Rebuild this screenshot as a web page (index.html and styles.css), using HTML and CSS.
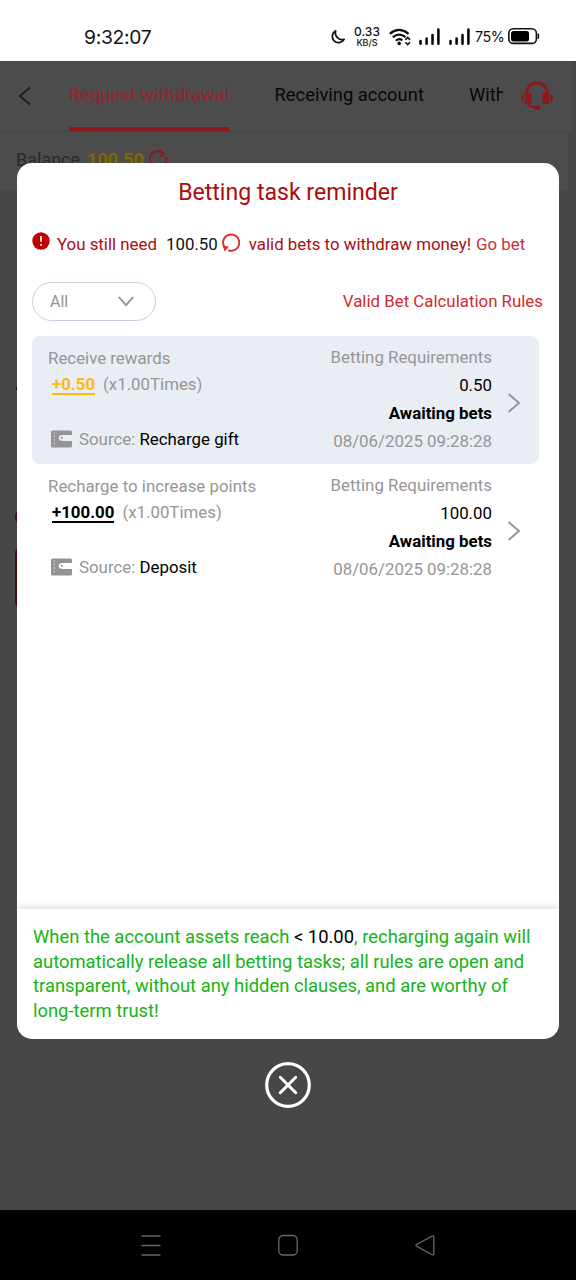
FILE: index.html
```html
<!DOCTYPE html>
<html lang="en">
<head>
<meta charset="utf-8">
<title>Betting task reminder</title>
<link rel="stylesheet" href="styles.css">
</head>
<body>
<div class="status">
  <span class="clock">9:32:07</span>
  <div class="indicators">
    <svg class="moon" width="16" height="16" viewBox="0 0 16 16"><path d="M5.6 1.8A6.3 6.3 0 1 0 14.1 10.4 7 7 0 0 1 5.6 1.8Z" fill="none" stroke="#111" stroke-width="1.8" stroke-linejoin="round"/></svg>
    <span class="speed"><b>0.33</b><i>KB/S</i></span>
    <svg class="wifi" width="22" height="18" viewBox="0 0 22 18"><g fill="none" stroke="#111" stroke-width="2.2"><path d="M.8 5.8Q10 -2 19.6 5.8"/><path d="M3.800 9.300Q10 3.900 16.600 9.200"/><path d="M6.800 12.700Q10 9.800 13.400 12.300"/></g><circle cx="10.200" cy="15.400" r="1.800" fill="#111"/><path d="M16.400 11.900L18.700 9.500L21 11.900M16.400 14.200L18.700 16.600L21 14.200" fill="none" stroke="#111" stroke-width="1.600"/></svg>
    <svg class="signal" width="21" height="17" viewBox="0 0 21 17"><path d="M1.500 13V15.700M7.600 10.500V15.700M13.500 7V15.700M19.400 1.500V15.700" stroke="#000" stroke-width="2.500" stroke-linecap="round"/></svg>
    <svg class="signal" width="21" height="17" viewBox="0 0 21 17"><path d="M1.500 13V15.700M7.600 10.500V15.700M13.500 7V15.700M19.400 1.500V15.700" stroke="#000" stroke-width="2.500" stroke-linecap="round"/></svg>
    <span class="percent">75%</span>
    <svg class="battery" width="32" height="17" viewBox="0 0 32 17"><rect x=".8" y=".8" width="27.600" height="14.600" rx="4.500" fill="none" stroke="#111" stroke-width="1.600"/><rect x="3" y="3" width="18" height="10.400" rx="2.500"/><path d="M30.300 5.600V10.800" stroke="#111" stroke-width="1.600"/></svg>
  </div>
</div>

<div class="app">
  <div class="header">
    <svg class="back" width="14" height="20" viewBox="0 0 14 20"><path d="M12 1.500L2 10L12 18.500" fill="none" stroke="#1d1d1d" stroke-width="2"/></svg>
    <div class="tabs">
      <span class="tab active">Request withdrawal</span>
      <span class="tab">Receiving account</span>
      <span class="tab">With</span>
    </div>
    <svg class="support" width="34" height="30" viewBox="0 0 34 30"><path d="M6.500 13C6.500-1.600 27.500-1.600 27.500 13" fill="none" stroke="#8c191c" stroke-width="3"/><path d="M4.800 11.500H11.500V23H4.800ZM22.500 11.500H29.200V23H22.500ZM3.600 13V21Q1 20.500 1 17T3.600 13ZM30.400 13V21Q33 20.500 33 17T30.400 13Z" fill="#8c191c"/><path d="M7 22Q9 26 15 26.500" fill="none" stroke="#8c191c" stroke-width="2"/><path d="M13.500 25.500L15.500 24H19.800V28.700H15Z" fill="#8c191c"/></svg>
  </div>
  <div class="balance">
    <span class="balance-label">Balance</span><b class="balance-value">100.50</b>
    <svg width="20" height="20" viewBox="0 0 20 20"><path d="M3.500 15.500A7.500 7.500 0 0 1 13.500 4M17 7.500A7.500 7.500 0 0 1 7 17" fill="none" stroke="#8c191c" stroke-width="2"/><path d="M10.500 .8L15 4.400L11 8" fill="none" stroke="#8c191c" stroke-width="1.800"/></svg>
  </div>
  <div class="mark mark-field"></div>
  <div class="mark mark-dot"></div>
  <div class="mark mark-button"></div>

  <div class="overlay">
    <div class="modal">
      <h1 class="title">Betting task reminder</h1>
      <div class="notice">
        <svg class="alert" width="18" height="18" viewBox="0 0 18 18"><circle cx="9" cy="9" r="8.700" fill="#c00006"/><path d="M9 4V9.700M9 11.900V13.700" stroke="#fff" stroke-width="1.700"/></svg>
        <span class="need">You still need</span>
        <span class="amount">100.50</span>
        <svg class="refresh" width="18" height="19" viewBox="0 0 18 19"><path d="M3.300 15.200A8.100 8.100 0 1 1 6.300 17.200" fill="none" stroke="#e0302b" stroke-width="2"/><path d="M.7 12.600L7 13.700L2.600 18.600Z" fill="#e0302b"/></svg>
        <span class="valid">valid bets to withdraw money!</span>
        <span class="go">Go bet</span>
      </div>
      <div class="filters">
        <div class="select"><span>All</span><svg width="16" height="11" viewBox="0 0 16 11"><path d="M.8 1L8 9.200L15.200 1" fill="none" stroke="#8e8e8e" stroke-width="1.800"/></svg></div>
        <span class="rules">Valid Bet Calculation Rules</span>
      </div>
      <div class="task shaded">
        <div class="left">
          <span class="kind">Receive rewards</span>
          <div class="gain"><b class="gold">+0.50</b><span>(x1.00Times)</span></div>
          <div class="source"><svg width="21" height="18" viewBox="0 0 21 18"><path d="M1.500 .5H19.500Q21 .5 21 2V5H12Q7.700 5 7.700 8T12 11H21V16Q21 17.500 19.500 17.500H1.500Q0 17.500 0 16V2Q0 .5 1.500 .5Z" fill="#949497"/><path d="M3.300 2V16" stroke="#c8cad0" stroke-dasharray="2 1.500"/><path d="M8.500 7.800Q8.500 5.500 11 5.500H21V10H11Q8.500 10 8.500 7.800Z" fill="#edf0f6"/><circle cx="10.800" cy="7.800" r="1.100" fill="#949497"/></svg><span>Source: <em>Recharge gift</em></span></div>
        </div>
        <div class="right"><span class="muted">Betting Requirements</span><span class="need-value">0.50</span><b>Awaiting bets</b><span class="date">08/06/2025 09:28:28</span></div>
        <svg class="chevron" width="14" height="20" viewBox="0 0 14 20"><path d="M1.500 1L12 10L1.500 19" fill="none" stroke="#929292" stroke-width="1.900"/></svg>
      </div>
      <div class="task">
        <div class="left">
          <span class="kind">Recharge to increase points</span>
          <div class="gain"><b>+100.00</b><span>(x1.00Times)</span></div>
          <div class="source"><svg width="21" height="18" viewBox="0 0 21 18"><path d="M1.500 .5H19.500Q21 .5 21 2V5H12Q7.700 5 7.700 8T12 11H21V16Q21 17.500 19.500 17.500H1.500Q0 17.500 0 16V2Q0 .5 1.500 .5Z" fill="#949497"/><path d="M3.300 2V16" stroke="#cecece" stroke-dasharray="2 1.500"/><path d="M8.500 7.800Q8.500 5.500 11 5.500H21V10H11Q8.500 10 8.500 7.800Z" fill="#fff"/><circle cx="10.800" cy="7.800" r="1.100" fill="#949497"/></svg><span>Source: <em>Deposit</em></span></div>
        </div>
        <div class="right"><span class="muted">Betting Requirements</span><span class="need-value">100.00</span><b>Awaiting bets</b><span class="date">08/06/2025 09:28:28</span></div>
        <svg class="chevron" width="14" height="20" viewBox="0 0 14 20"><path d="M1.500 1L12 10L1.500 19" fill="none" stroke="#929292" stroke-width="1.900"/></svg>
      </div>
      <div class="footer">When the account assets reach <em>&lt; 10.00</em>, recharging again will<br>automatically release all betting tasks; all rules are open and<br>transparent, without any hidden clauses, and are worthy of<br>long-term trust!</div>
    </div>
    <svg class="close" width="46" height="46" viewBox="0 0 46 46"><circle cx="23" cy="23" r="21.300" fill="none" stroke="#fff" stroke-width="3.200"/><path d="M15.300 15.300L30.700 30.700M30.700 15.300L15.300 30.700" stroke="#fff" stroke-width="3" stroke-linecap="round"/></svg>
  </div>
</div>

<div class="nav">
  <svg width="20" height="22" viewBox="0 0 20 22"><path d="M.5 2H19.500M.5 11.500H19.500M.5 21H19.500" stroke="#666" stroke-width="1.500"/></svg>
  <svg width="20" height="22" viewBox="0 0 20 22"><rect x=".8" y="1.500" width="18.400" height="19.500" rx="4.500" fill="none" stroke="#666" stroke-width="1.300"/></svg>
  <svg width="20" height="22" viewBox="0 0 20 22"><path d="M1.300 10.700Q.5 11.500 1.500 12.100L17 20.700Q18.800 21.500 18.800 19.800V3Q18.800 1.300 17 2.200Z" fill="none" stroke="#666" stroke-width="1.300"/></svg>
</div>
</body>
</html>
```

FILE: styles.css
```css
* { box-sizing: border-box; }
body {
  margin: 0;
  width: 576px;
  height: 1280px;
  display: flex;
  flex-direction: column;
  overflow: hidden;
  font-family: Roboto, "Liberation Sans", sans-serif;
  font-size: 16.850px;
  white-space: nowrap;
  background: #000;
}
svg { display: block; flex: none; }
em, i { font-style: normal; }

.status {
  height: 61px;
  padding: 12px 36px 0 84px;
  display: flex;
  justify-content: space-between;
  align-items: center;
  background: #fff;
  color: #111;
}
.clock { font-family: Inter, sans-serif; font-size: 19.300px; letter-spacing: -0.3px; }
.indicators { display: flex; align-items: center; }
.speed {
  width: 28px;
  margin: 0 8px 0 7px;
  display: flex;
  flex-direction: column;
  align-items: center;
  font-family: Inter, sans-serif;
}
.speed b { font-size: 12px; line-height: 12px; font-weight: 500; }
.speed i { font-size: 9px; line-height: 10px; font-weight: 500; }
.wifi { margin-right: 8px; }
.signal { margin-right: 9px; }
.percent { width: 29px; margin: 0 4px 0 -4px; font-family: Inter, sans-serif; font-size: 14.300px; letter-spacing: -0.4px; }

.app { position: relative; height: 1149px; background: #464749; }
.header {
  width: 572px;
  height: 71px;
  padding-left: 18px;
  display: flex;
  background: #4c4c4c;
  border-bottom: 1.500px solid #434648;
}
.back { margin-top: 25px; }
.tabs { width: 434px; margin-left: 37px; display: flex; gap: 45px; overflow: hidden; }
.tab { height: 70px; flex: none; line-height: 68px; font-size: 18.400px; color: #070707; }
.tab:last-child { width: 34px; overflow: hidden; }
.tab.active { color: #9a222b; border-bottom: 4px solid #8c191c; }
.support { margin: 20px 0 0 17px; }
.balance {
  width: 568px;
  height: 58px;
  padding: 17px 0 0 16px;
  display: flex;
  align-items: flex-start;
  background: #4c4c4c;
  line-height: 22px;
  font-size: 18px;
  color: #292929;
}
.balance-value { margin: 0 5px 0 7px; color: #806706; }
.mark { position: absolute; left: 15px; width: 12px; background: #4c080d; }
.mark-field { top: 326px; left: 16px; height: 3px; background: #111; }
.mark-dot { top: 449px; height: 14px; border-radius: 7px; }
.mark-button { top: 486px; height: 61px; border-radius: 6px; }

.overlay {
  position: absolute;
  inset: 0;
  padding-top: 102px;
  display: flex;
  flex-direction: column;
  align-items: center;
  gap: 23px;
}
.modal {
  width: 542px;
  height: 876px;
  display: flex;
  flex-direction: column;
  border-radius: 15px;
  background: #fff;
  overflow: hidden;
}
.title { margin: 15px 0 0; text-align: center; font-size: 23.080px; line-height: 30px; font-weight: 400; color: #b00a0a; }
.notice { height: 24px; margin: 24px 0 0 15px; display: flex; align-items: center; color: #a90d10; }
.alert { margin: -6px 7px 0 0; }
.amount { margin: 0 4px 0 9px; color: #111; }
.refresh { margin: -3px 9px 0 0; }
.go { margin-left: 5px; color: #cf3035; }
.filters { height: 39px; margin: 26px 16px 0 15px; display: flex; justify-content: space-between; align-items: center; }
.select {
  width: 124px;
  height: 39px;
  padding: 0 21px 0 17px;
  display: flex;
  justify-content: space-between;
  align-items: center;
  border: 1.500px solid #cbcde4;
  border-radius: 20px;
  color: #929292;
}
.select span { font-size: 16px; }
.rules { padding-bottom: 2px; color: #cf2b30; }

.task { width: 507px; height: 128px; flex: none; margin-left: 15px; padding-left: 16px; display: flex; border-radius: 8px; color: #969696; }
.task.shaded { margin-top: 15px; background: #e9edf4; }
.left { flex: 1; }
.kind { display: block; margin-top: 11px; line-height: 22px; }
.gain { margin: 4px 0 0 4px; display: flex; gap: 8px; line-height: 22px; }
.gain b { height: 22px; border-bottom: 2px solid #000; color: #000; }
.gain .gold { border-color: #fbb914; color: #fbb914; }
.source { margin: 33px 0 0 3px; display: flex; gap: 7px; align-items: center; line-height: 22px; }
.source em { color: #000; }
.right { padding-top: 8px; display: flex; flex-direction: column; align-items: flex-end; line-height: 27.900px; }
.right b, .need-value { color: #000; }
.chevron { margin: 57px 18px 0 15px; }
.footer {
  height: 130px;
  flex: none;
  margin-top: auto;
  padding: 16px 16px 0;
  font-size: 18.400px;
  line-height: 24.500px;
  color: #17b317;
  box-shadow: 0 -2px 6px rgba(0, 0, 0, 0.14);
}
.footer em { color: #000; }

.nav { height: 70px; padding: 0 141px; display: flex; justify-content: space-between; align-items: center; background: #000; }
```
